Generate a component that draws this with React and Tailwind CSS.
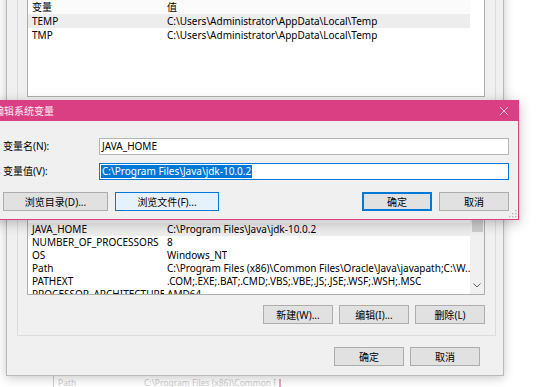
import React from "react";

const C = ({ children }) => <span className="text-[10px]">{children}</span>;

const Btn = ({ children, w = "w-[70px]", variant = "normal" }) => {
  const styles = {
    normal: "bg-[#e1e1e1] border-[#adadad]",
    hover: "bg-[#e5f1fb] border-[#0078d7]",
    focus: "bg-[#e1e1e1] border-[#0078d7] shadow-[inset_0_0_0_1px_#0078d7]",
  };
  return (
    <div className={`${w} h-[19px] shrink-0 border flex items-center justify-center ${styles[variant]}`}>
      <span className="leading-none whitespace-nowrap">{children}</span>
    </div>
  );
};

const topRows = [
  ["TEMP", "C:\\Users\\Administrator\\AppData\\Local\\Temp", true],
  ["TMP", "C:\\Users\\Administrator\\AppData\\Local\\Temp", false],
];

const sysRows = [
  ["JAVA_HOME", "C:\\Program Files\\Java\\jdk-10.0.2", true],
  ["NUMBER_OF_PROCESSORS", "8", false],
  ["OS", "Windows_NT", false],
  ["Path", "C:\\Program Files (x86)\\Common Files\\Oracle\\Java\\javapath;C:\\W...", false],
  ["PATHEXT", ".COM;.EXE;.BAT;.CMD;.VBS;.VBE;.JS;.JSE;.WSF;.WSH;.MSC", false],
  ["PROCESSOR_ARCHITECTURE", "AMD64", false],
];

export default function App() {
  return (
    <div className="relative w-[537px] h-[387px] overflow-hidden bg-white text-black text-[10px] font-['Noto_Sans','Noto_Sans_CJK_SC',sans-serif]">
      {/* window further behind */}
      <div className="absolute left-[53px] top-[366px] w-[470px] h-[40px] bg-white border-l border-[#cfcfcf]">
        <div className="flex pt-[13px] text-[#cdcdcd] text-[8.5px] leading-none">
          <span className="ml-[4px] w-[86px]">Path</span>
          <span className="w-[132px] overflow-hidden whitespace-nowrap">C:\Program Files (x86)\Common Files\Oracle\Java</span>
          <span className="ml-[3px] w-[2px] h-[9px] bg-[#e7a6c2]"></span>
        </div>
      </div>

      {/* background window */}
      <div className="absolute left-[6px] top-[-40px] w-[498px] h-[416px] bg-[#f0f0f0] border border-[#b9b9b9] shadow-[0_2px_10px_rgba(0,0,0,0.22)] flex flex-col pt-[7px] pl-[10px] pr-[7px]">
        {/* user variables group */}
        <div className="h-[165px] shrink-0 border border-[#dcdcdc] pt-[30px] pl-[9px] pr-[10px]">
          <div className="h-[98px] border border-[#adadad] bg-white flex flex-col">
            <div className="h-[14px] w-[442px] flex items-center bg-[#fbfbfb]">
              <span className="w-[136px] pl-[4px]"><C>变量</C></span>
              <span className="pl-[3px]"><C>值</C></span>
            </div>
            {topRows.map(([n, v, sel]) => (
              <div key={n} className={`h-[14px] w-[442px] flex items-center ${sel ? "bg-[#ededed]" : ""}`}>
                <span className="w-[136px] pl-[4px] whitespace-nowrap">{n}</span>
                <span className="pl-[3px] whitespace-nowrap">{v}</span>
              </div>
            ))}
          </div>
        </div>

        {/* system variables group */}
        <div className="h-[196px] shrink-0 mt-[7px] border border-[#dcdcdc] pt-[14px] pl-[9px] pr-[10px] flex flex-col">
          <div className="h-[140px] shrink-0 border border-[#adadad] bg-white flex overflow-hidden">
            <div className="flex-1 flex flex-col overflow-hidden">
              <div className="h-[16px] shrink-0 flex items-center">
                <span className="w-[136px] pl-[4px]"><C>变量</C></span>
                <span className="pl-[3px]"><C>值</C></span>
              </div>
              <div className="h-[51px] shrink-0"></div>
              {sysRows.map(([n, v, sel]) => (
                <div key={n} className={`h-[13px] shrink-0 flex items-center ${sel ? "bg-[#ededed]" : ""}`}>
                  <span className="w-[136px] shrink-0 pl-[4px] whitespace-nowrap overflow-hidden">{n}</span>
                  <span className="pl-[3px] whitespace-nowrap overflow-hidden">{v}</span>
                </div>
              ))}
            </div>
            <div className="w-[14px] shrink-0 bg-[#f0f0f0] flex flex-col items-center">
              <div className="h-[17px] shrink-0"></div>
              <div className="h-[22px] shrink-0"></div>
              <div className="w-[11px] h-[37px] shrink-0 bg-[#cdcdcd]"></div>
              <div className="flex-1"></div>
              <div className="h-[17px] shrink-0 flex items-center justify-center">
                <svg width="8" height="5" viewBox="0 0 8 5">
                  <path d="M0.5 0.5 L4 4 L7.5 0.5" fill="none" stroke="#606060" strokeWidth="1" />
                </svg>
              </div>
            </div>
          </div>
          <div className="mt-[10px] flex justify-end gap-[6px]">
            <Btn><C>新建</C>(W)...</Btn>
            <Btn><C>编辑</C>(I)...</Btn>
            <Btn><C>删除</C>(L)</Btn>
          </div>
        </div>

        <div className="mt-[11px] flex justify-end gap-[6px] pr-[16px]">
          <Btn><C>确定</C></Btn>
          <Btn><C>取消</C></Btn>
        </div>
      </div>

      {/* edit dialog */}
      <div className="absolute left-[-10px] top-[100px] w-[529px] h-[120px] bg-[#f0f0f0] border border-[#d93f82] shadow-[0_3px_12px_rgba(0,0,0,0.25)] flex flex-col">
        <div className="h-[20px] shrink-0 bg-[#d93f82] flex items-center justify-between pl-[3px] pr-[9px]">
          <span className="text-white/90 leading-none"><C>编辑系统变量</C></span>
          <svg width="10" height="10" viewBox="0 0 10 10">
            <path d="M1 1 L9 9 M9 1 L1 9" stroke="#f4c6da" strokeWidth="1" />
          </svg>
        </div>
        <div className="flex-1 flex flex-col pl-[12px] pr-[9px] pt-[17px]">
          <div className="flex items-center h-[17px]">
            <span className="w-[96px] shrink-0"><C>变量名</C>(N):</span>
            <div className="w-[410px] h-[17px] bg-white border border-[#b4b4b4] flex items-center pl-[2px]">
              <span>JAVA_HOME</span>
            </div>
          </div>
          <div className="flex items-center h-[17px] mt-[8px]">
            <span className="w-[96px] shrink-0"><C>变量值</C>(V):</span>
            <div className="w-[410px] h-[17px] bg-white border border-[#0078d7] flex items-center pl-[1px]">
              <span className="bg-[#0078d7] text-white px-[1px] leading-[13px]">C:\Program Files\Java\jdk-10.0.2</span>
            </div>
          </div>
          <div className="flex mt-[12px]">
            <Btn w="w-[105px]"><C>浏览目录</C>(D)...</Btn>
            <div className="ml-[7px]">
              <Btn w="w-[104px]" variant="hover"><C>浏览文件</C>(F)...</Btn>
            </div>
            <div className="flex-1"></div>
            <Btn variant="focus"><C>确定</C></Btn>
            <div className="ml-[7px]">
              <Btn><C>取消</C></Btn>
            </div>
          </div>
        </div>
        <svg className="absolute right-[1px] bottom-[1px]" width="8" height="8" viewBox="0 0 8 8">
          <g fill="#b5b5b5">
            <rect x="6" y="0" width="1.3" height="1.3" />
            <rect x="3" y="3" width="1.3" height="1.3" />
            <rect x="6" y="3" width="1.3" height="1.3" />
            <rect x="0" y="6" width="1.3" height="1.3" />
            <rect x="3" y="6" width="1.3" height="1.3" />
            <rect x="6" y="6" width="1.3" height="1.3" />
          </g>
        </svg>
      </div>
    </div>
  );
}
